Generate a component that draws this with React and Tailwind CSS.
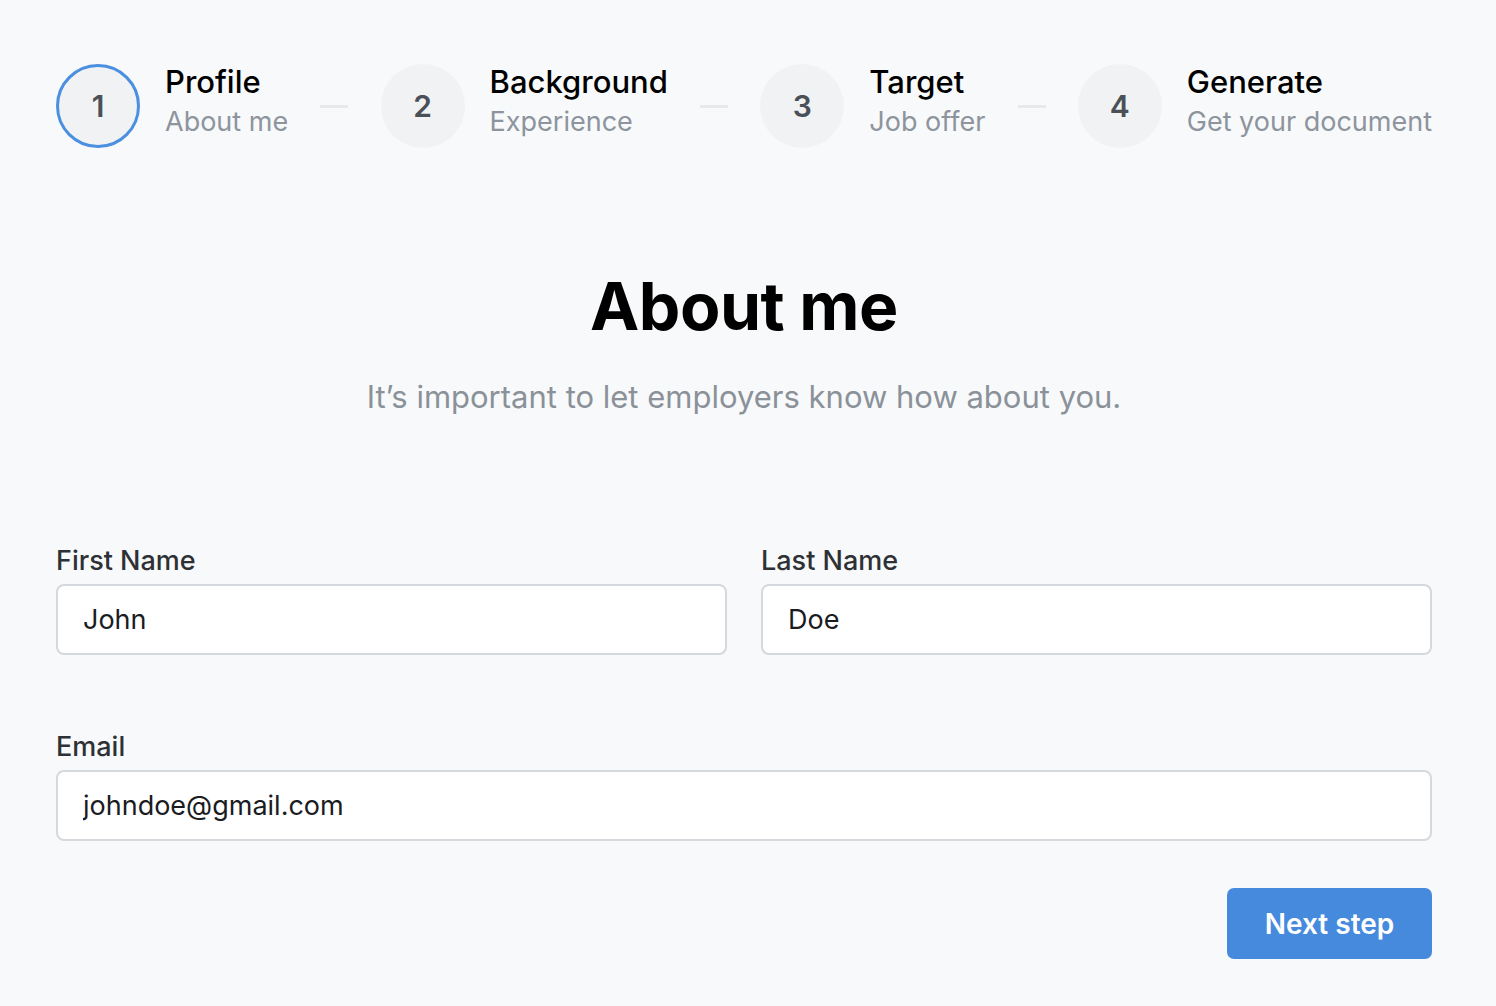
import React from 'react';

const steps = [
  { n: 1, title: 'Profile', sub: 'About me', active: true },
  { n: 2, title: 'Background', sub: 'Experience' },
  { n: 3, title: 'Target', sub: 'Job offer' },
  { n: 4, title: 'Generate', sub: 'Get your document' },
];

function Step({ step }) {
  return (
    <div className="flex items-center gap-[25px]">
      <div
        className={
          step.active
            ? 'w-[84px] h-[84px] rounded-full border-[3px] border-[#4a8fe0] bg-[#f1f2f4] flex items-center justify-center text-[30px] font-semibold text-[#4b5058]'
            : 'w-[84px] h-[84px] rounded-full bg-[#f1f2f4] flex items-center justify-center text-[30px] font-semibold text-[#4b5058]'
        }
      >
        {step.n}
      </div>
      <div className="flex flex-col pb-[8px]">
        <span className="text-[31px] leading-[40px] font-medium text-black">{step.title}</span>
        <span className="text-[27px] leading-[40px] text-[#8d949e]">{step.sub}</span>
      </div>
    </div>
  );
}

function Field({ label, value }) {
  return (
    <label className="flex flex-col gap-[7px]">
      <span className="text-[27px] leading-[32px] font-medium text-[#2d3136]">{label}</span>
      <input
        defaultValue={value}
        className="h-[71px] w-full bg-white border-2 border-[#d5d8dc] rounded-[8px] px-[25px] text-[27px] text-[#1a1c1f] outline-none"
      />
    </label>
  );
}

export default function App() {
  return (
    <div className="min-h-screen bg-[#f8f9fa] font-['Inter','Noto_Sans',sans-serif] pl-[56px] pr-[64px] pt-[62px]">
      <div className="flex items-center justify-between">
        {steps.map((s, i) => (
          <React.Fragment key={s.n}>
            <Step step={s} />
            {i < steps.length - 1 && <div className="w-[28px] h-[3px] bg-[#e8e9eb]" />}
          </React.Fragment>
        ))}
      </div>

      <div className="flex flex-col items-center mt-[116px]">
        <h1 className="text-[66px] leading-[80px] font-bold text-black tracking-[-0.5px]">About me</h1>
        <p className="mt-[31px] text-[31px] leading-[40px] text-[#8a9199]">
          It’s important to let employers know how about you.
        </p>
      </div>

      <div className="mt-[128px] grid grid-cols-2 gap-x-[34px]">
        <Field label="First Name" value="John" />
        <Field label="Last Name" value="Doe" />
      </div>

      <div className="mt-[76px]">
        <Field label="Email" value="johndoe@gmail.com" />
      </div>

      <div className="flex justify-end mt-[47px]">
        <button className="w-[205px] h-[71px] rounded-[7px] bg-[#468ade] text-white text-[28px] font-semibold">
          Next step
        </button>
      </div>
    </div>
  );
}
